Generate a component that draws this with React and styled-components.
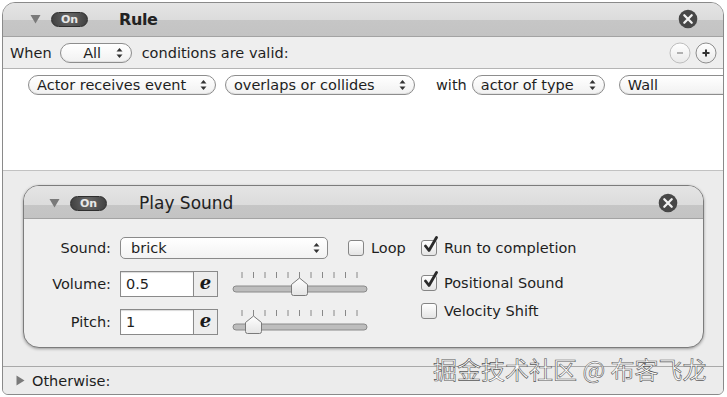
import React from "react";
import styled, { createGlobalStyle } from "styled-components";

const GlobalStyle = createGlobalStyle`
  *, *::before, *::after {
    box-sizing: border-box;
  }
  html, body {
    margin: 0;
    padding: 0;
    background: #ffffff;
  }
  body {
    font-family: "DejaVu Sans", "Liberation Sans", sans-serif;
    font-size: 14.5px;
    color: #1e1e1e;
  }
`;

const Window = styled.div`
  position: relative;
  margin: 2px 0 0 2px;
  width: 722px;
  height: 393px;
  border: 1px solid #8a8a8a;
  border-radius: 13px 13px 6px 6px;
  overflow: hidden;
  display: flex;
  flex-direction: column;
  background: #ececec;
`;

const TitleBar = styled.div`
  height: ${(p) => (p.$small ? 33 : 34)}px;
  flex-shrink: 0;
  display: flex;
  align-items: center;
  padding-left: ${(p) => (p.$small ? 25 : 27)}px;
  padding-right: 25px;
  border-bottom: 1px solid #a3a3a3;
  background: linear-gradient(
    #e4e4e4 0,
    #dcdcdc ${(p) => (p.$small ? 19 : 17)}px,
    #c6c6c6 ${(p) => (p.$small ? 19 : 17)}px,
    #c3c3c3 100%
  );
`;

const Title = styled.span`
  font-size: ${(p) => (p.$bold ? 16 : 17)}px;
  font-weight: ${(p) => (p.$bold ? 700 : 400)};
  letter-spacing: ${(p) => (p.$bold ? "-0.4px" : "0")};
  color: #222;
  margin-left: ${(p) => (p.$bold ? 31 : 32)}px;
  margin-top: ${(p) => (p.$bold ? -1 : 2)}px;
  flex: 1;
`;

const OnBadge = styled.span`
  margin-left: 10px;
  width: 37px;
  height: 15px;
  border-radius: 8px;
  background: radial-gradient(circle at 50% 40%, #6a6a6a, #3e3e3e);
  border: 1px solid #2e2e2e;
  color: #e8e8e8;
  font-size: 11px;
  font-weight: 700;
  line-height: 13px;
  text-align: center;
  margin-top: ${(p) => (p.$low ? 3 : 0)}px;
`;

const WhenRow = styled.div`
  height: 32px;
  flex-shrink: 0;
  display: flex;
  align-items: center;
  padding: 0 6px 0 7px;
  background: #eeeeee;
  border-bottom: 1px solid #b4b4b4;
`;

const Conditions = styled.div`
  height: 102px;
  flex-shrink: 0;
  background: #ffffff;
  border-bottom: 1px solid #c2c2c2;
  display: flex;
  align-items: flex-start;
  padding: 6px 0 0 25px;
  overflow: hidden;
  white-space: nowrap;
`;

const Pill = styled.div`
  flex-shrink: 0;
  width: ${(p) => p.$w}px;
  height: 20px;
  border: 1px solid #8d8d8d;
  border-radius: 11px;
  background: linear-gradient(#ffffff, #f1f1f1);
  box-shadow: inset 0 -1px 0 #e2e2e2;
  display: flex;
  align-items: center;
  justify-content: space-between;
  padding: 0 8px;
  margin-left: ${(p) => p.$ml || 0}px;
  line-height: 18px;
`;

const PillText = styled.span`
  flex: ${(p) => (p.$grow ? 1 : "none")};
  text-align: ${(p) => (p.$grow ? "center" : "left")};
`;

const Word = styled.span`
  margin-left: ${(p) => p.$ml || 0}px;
  line-height: 20px;
`;

const Spacer = styled.div`
  flex: 1;
`;

const Actions = styled.div`
  height: 195px;
  flex-shrink: 0;
  padding: 14px 0 0 20px;
  background: #ececec;
`;

const Panel = styled.div`
  width: 681px;
  height: 163px;
  border: 1px solid #7c7c7c;
  border-radius: 16px;
  overflow: hidden;
  background: #efefef;
  box-shadow: 0 1px 3px rgba(0, 0, 0, 0.35);
`;

const PanelBody = styled.div`
  display: flex;
`;

const LeftColumn = styled.div`
  width: 397px;
  padding-top: 18px;
`;

const FormRow = styled.div`
  display: flex;
  align-items: center;
  height: ${(p) => p.$h}px;
  margin-top: ${(p) => p.$mt || 0}px;
`;

const Label = styled.span`
  width: 87px;
  text-align: right;
  margin-right: 9px;
  flex-shrink: 0;
`;

const SoundPopup = styled.div`
  width: 208px;
  height: 22px;
  border: 1px solid #8a8a8a;
  border-radius: 5px;
  background: linear-gradient(#ffffff, #f3f3f3);
  display: flex;
  align-items: center;
  justify-content: space-between;
  padding: 0 7px 0 10px;
`;

const TextField = styled.div`
  width: 73px;
  height: 26px;
  border: 1px solid #8a8a8a;
  border-right: none;
  background: #ffffff;
  padding-left: 5px;
  line-height: 24px;
  box-shadow: inset 0 1px 1px rgba(0, 0, 0, 0.15);
`;

const ExprButton = styled.div`
  width: 25px;
  height: 26px;
  border: 1px solid #8a8a8a;
  background: #ededed;
  font-family: "DejaVu Serif", serif;
  font-style: italic;
  font-weight: 700;
  font-size: 18px;
  line-height: 22px;
  text-align: center;
  color: #1a1a1a;
`;

const SliderWrap = styled.div`
  margin-left: 14px;
  align-self: flex-start;
  margin-top: -2px;
`;

const CheckRow = styled.label`
  display: flex;
  align-items: center;
  height: 18px;
  margin-left: ${(p) => p.$ml || 0}px;
  margin-top: ${(p) => p.$mt || 0}px;
`;

const Box = styled.span`
  position: relative;
  width: 16px;
  height: 16px;
  border: 1px solid #858585;
  border-radius: 3px;
  background: linear-gradient(#ffffff, #e4e4e4);
  margin-right: 7px;
  flex-shrink: 0;
`;

const CheckMark = styled.svg`
  position: absolute;
  left: 1px;
  top: -5px;
`;

const OptionColumn = styled.div`
  padding-top: 20px;
`;

const OtherwiseRow = styled.div`
  flex: 1;
  border-top: 1px solid #a9a9a9;
  display: flex;
  align-items: center;
  padding-left: 13px;
  background: #ececec;
`;

const Watermark = styled.div`
  position: absolute;
  left: 430px;
  top: 354px;
  font-family: "Noto Sans CJK SC", sans-serif;
  font-size: 24px;
  line-height: 24px;
  color: #ffffff;
  -webkit-text-stroke: 0.6px #555555;
  white-space: nowrap;
  pointer-events: none;
`;

const Stepper = () => (
  <svg width="7" height="12" viewBox="0 0 7 12">
    <path d="M3.5 1 L6.5 4.5 L0.5 4.5 Z" fill="#333" />
    <path d="M3.5 11 L6.5 7.5 L0.5 7.5 Z" fill="#333" />
  </svg>
);

const Disclosure = ({ open = true, low }) =>
  open ? (
    <svg width="11" height="10" viewBox="0 0 11 10" style={{ marginTop: low ? 2 : -1 }}>
      <path d="M0.5 1 L10.5 1 L5.5 9.5 Z" fill="#7a7a7a" />
    </svg>
  ) : (
    <svg width="9" height="11" viewBox="0 0 9 11">
      <path d="M0.5 0.5 L8.5 5.5 L0.5 10.5 Z" fill="#7a7a7a" />
    </svg>
  );

const CloseButton = ({ low }) => (
  <svg width="20" height="20" viewBox="0 0 20 20" style={{ marginTop: low ? 1 : -2 }}>
    <circle cx="10" cy="10" r="9.3" fill="#474747" />
    <path d="M6.3 6.3 L13.7 13.7 M13.7 6.3 L6.3 13.7" stroke="#f2f2f2" strokeWidth="2.3" strokeLinecap="round" />
  </svg>
);

const RoundButton = ({ plus }) => (
  <svg width="22" height="22" viewBox="0 0 22 22" style={{ marginLeft: plus ? 4 : 0 }}>
    <defs>
      <linearGradient id={plus ? "gp" : "gm"} x1="0" y1="0" x2="0" y2="1">
        <stop offset="0" stopColor="#ffffff" />
        <stop offset="1" stopColor="#e9e9e9" />
      </linearGradient>
    </defs>
    <circle cx="11" cy="11" r="10" fill={`url(#${plus ? "gp" : "gm"})`} stroke={plus ? "#8c8c8c" : "#bdbdbd"} />
    {plus ? (
      <path d="M11 7.5 V14.5 M7.5 11 H14.5" stroke="#333" strokeWidth="2" />
    ) : (
      <path d="M8 11 H14" stroke="#b0b0b0" strokeWidth="1.8" />
    )}
  </svg>
);

const Check = ({ on }) => (
  <Box>
    {on && (
      <CheckMark width="16" height="18" viewBox="0 0 16 18">
        <path d="M2.5 10 L6 14.5 L13.5 1.5" fill="none" stroke="#2a2a2a" strokeWidth="2.8" strokeLinecap="round" strokeLinejoin="round" />
      </CheckMark>
    )}
  </Box>
);

const Slider = ({ index }) => {
  const ticks = Array.from({ length: 11 }, (_, i) => 10 + i * 11.5);
  const cx = ticks[index];
  return (
    <svg width="136" height="30" viewBox="0 0 136 30">
      <defs>
        <linearGradient id="knob" x1="0" y1="0" x2="0" y2="1">
          <stop offset="0" stopColor="#ffffff" />
          <stop offset="1" stopColor="#e4e4e4" />
        </linearGradient>
      </defs>
      {ticks.map((x, i) => (
        <line key={i} x1={x} y1="3" x2={x} y2="9" stroke="#888" strokeWidth="1" />
      ))}
      <rect x="1" y="17" width="134" height="6" rx="3" fill="#bdbdbd" stroke="#8a8a8a" strokeWidth="1" />
      <path
        d={`M${cx} 9 L${cx + 8} 15.5 L${cx + 8} 24.5 Q${cx + 8} 26.5 ${cx + 6} 26.5 L${cx - 6} 26.5 Q${cx - 8} 26.5 ${cx - 8} 24.5 L${cx - 8} 15.5 Z`}
        fill="url(#knob)"
        stroke="#7a7a7a"
        strokeWidth="1"
        strokeLinejoin="round"
      />
    </svg>
  );
};

export default function App() {
  return (
    <>
      <GlobalStyle />
      <Window>
        <TitleBar>
          <Disclosure />
          <OnBadge>On</OnBadge>
          <Title $bold>Rule</Title>
          <CloseButton />
        </TitleBar>

        <WhenRow>
          <Word>When</Word>
          <Pill $w={72} $ml={8}>
            <PillText $grow>All</PillText>
            <Stepper />
          </Pill>
          <Word $ml={10}>conditions are valid:</Word>
          <Spacer />
          <RoundButton />
          <RoundButton plus />
        </WhenRow>

        <Conditions>
          <Pill $w={188}>
            <PillText>Actor receives event</PillText>
            <Stepper />
          </Pill>
          <Pill $w={190} $ml={9}>
            <PillText>overlaps or collides</PillText>
            <Stepper />
          </Pill>
          <Word $ml={21}>with</Word>
          <Pill $w={133} $ml={5}>
            <PillText>actor of type</PillText>
            <Stepper />
          </Pill>
          <Pill $w={130} $ml={14}>
            <PillText>Wall</PillText>
          </Pill>
        </Conditions>

        <Actions>
          <Panel>
            <TitleBar $small>
              <Disclosure low />
              <OnBadge $low>On</OnBadge>
              <Title>Play Sound</Title>
              <CloseButton low />
            </TitleBar>
            <PanelBody>
              <LeftColumn>
                <FormRow $h={22}>
                  <Label>Sound:</Label>
                  <SoundPopup>
                    <span>brick</span>
                    <Stepper />
                  </SoundPopup>
                  <CheckRow $ml={20}>
                    <Check />
                    Loop
                  </CheckRow>
                </FormRow>
                <FormRow $h={26} $mt={12}>
                  <Label>Volume:</Label>
                  <TextField>0.5</TextField>
                  <ExprButton>e</ExprButton>
                  <SliderWrap>
                    <Slider index={5} />
                  </SliderWrap>
                </FormRow>
                <FormRow $h={26} $mt={12}>
                  <Label>Pitch:</Label>
                  <TextField>1</TextField>
                  <ExprButton>e</ExprButton>
                  <SliderWrap>
                    <Slider index={1} />
                  </SliderWrap>
                </FormRow>
              </LeftColumn>
              <OptionColumn>
                <CheckRow>
                  <Check on />
                  Run to completion
                </CheckRow>
                <CheckRow $mt={17}>
                  <Check on />
                  Positional Sound
                </CheckRow>
                <CheckRow $mt={10}>
                  <Check />
                  Velocity Shift
                </CheckRow>
              </OptionColumn>
            </PanelBody>
          </Panel>
        </Actions>

        <OtherwiseRow>
          <Disclosure open={false} />
          <Word $ml={7}>Otherwise:</Word>
        </OtherwiseRow>
        <Watermark>掘金技术社区 @ 布客飞龙</Watermark>
      </Window>
    </>
  );
}
